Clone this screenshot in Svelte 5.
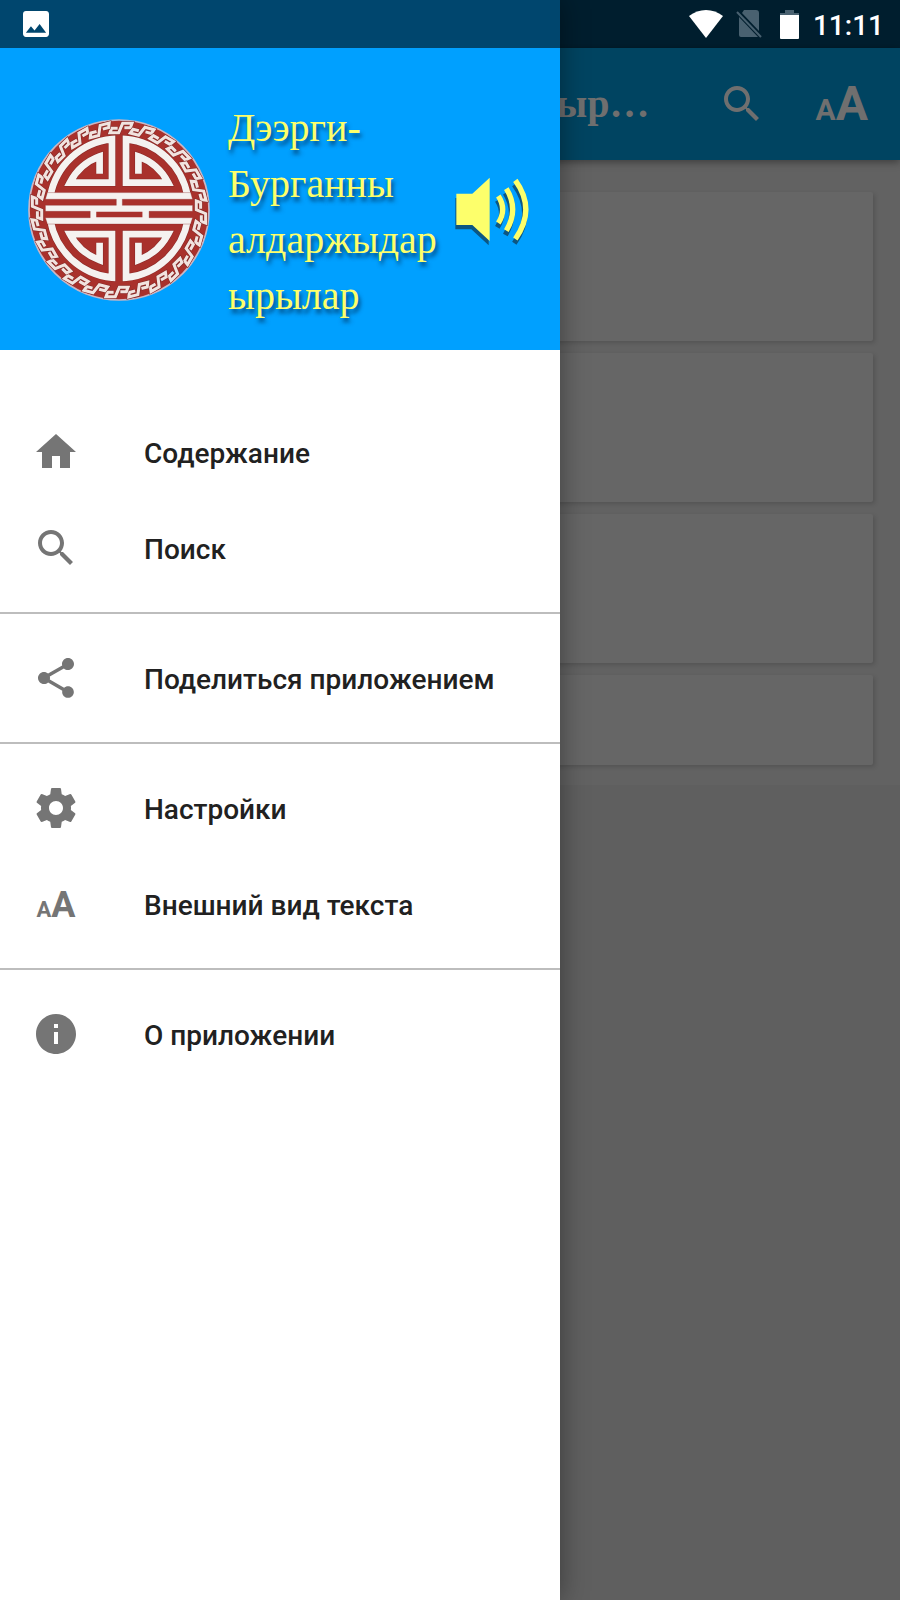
<script>
  const groups = [
    [
      { icon: 'home', label: 'Содержание' },
      { icon: 'search', label: 'Поиск' }
    ],
    [{ icon: 'share', label: 'Поделиться приложением' }],
    [
      { icon: 'settings', label: 'Настройки' },
      { icon: 'text', label: 'Внешний вид текста' }
    ],
    [{ icon: 'info', label: 'О приложении' }]
  ];

  const paths = {
    home: 'M10 20v-6h4v6h5v-8h3L12 3 2 12h3v8z',
    search:
      'M15.5 14h-.79l-.28-.27C15.41 12.59 16 11.11 16 9.5 16 5.91 13.09 3 9.5 3S3 5.91 3 9.5 5.91 16 9.5 16c1.61 0 3.09-.59 4.23-1.57l.27.28v.79l5 4.99L20.49 19l-4.99-5zm-6 0C7.01 14 5 11.99 5 9.5S7.01 5 9.5 5 14 7.01 14 9.5 11.99 14 9.5 14z',
    share:
      'M18 16.08c-.76 0-1.44.3-1.96.77L8.91 12.7c.05-.23.09-.46.09-.7s-.04-.47-.09-.7l7.05-4.11c.54.5 1.25.81 2.04.81 1.66 0 3-1.34 3-3s-1.34-3-3-3-3 1.34-3 3c0 .24.04.47.09.7L8.04 9.81C7.5 9.31 6.79 9 6 9c-1.66 0-3 1.34-3 3s1.34 3 3 3c.79 0 1.5-.31 2.04-.81l7.12 4.16c-.05.21-.08.43-.08.65 0 1.61 1.31 2.92 2.92 2.92s2.92-1.31 2.92-2.92-1.31-2.92-2.92-2.92z',
    settings:
      'M19.43 12.98c.04-.32.07-.64.07-.98s-.03-.66-.07-.98l2.11-1.65c.19-.15.24-.42.12-.64l-2-3.46c-.12-.22-.39-.3-.61-.22l-2.49 1c-.52-.4-1.08-.73-1.69-.98l-.38-2.65C14.46 2.18 14.25 2 14 2h-4c-.25 0-.46.18-.49.42l-.38 2.65c-.61.25-1.17.59-1.69.98l-2.49-1c-.23-.09-.49 0-.61.22l-2 3.46c-.13.22-.07.49.12.64l2.11 1.65c-.04.32-.07.65-.07.98s.03.66.07.98l-2.11 1.65c-.19.15-.24.42-.12.64l2 3.46c.12.22.39.3.61.22l2.49-1c.52.4 1.08.73 1.69.98l.38 2.65c.03.24.24.42.49.42h4c.25 0 .46-.18.49-.42l.38-2.65c.61-.25 1.17-.59 1.69-.98l2.49 1c.23.09.49 0 .61-.22l2-3.46c.12-.22.07-.49-.12-.64l-2.11-1.65zM12 15.5c-1.93 0-3.5-1.57-3.5-3.5s1.57-3.5 3.5-3.5 3.5 1.57 3.5 3.5-1.57 3.5-3.5 3.5z',
    info: 'M12 2C6.48 2 2 6.48 2 12s4.48 10 10 10 10-4.48 10-10S17.52 2 12 2zm1 15h-2v-6h2v6zm0-8h-2V7h2v2z'
  };

  const frets = Array.from({ length: 24 }, (_, i) => i * 15);
  const fret = 'M-10 1H-28L-33 14H-7L5 -14H33L28 -1H10';
  const quarter = 'M93 258A208 208 0 0 1 277 88V218H151A166 166 0 0 1 240 140V192';
  const quarters = ['', 'translate(596 0) scale(-1 1)', 'translate(0 590) scale(1 -1)', 'translate(596 590) scale(-1 -1)'];
</script>

{#snippet textSize()}
  <span class="aa" aria-hidden="true"><small>A</small>A</span>
{/snippet}

<div class="app">
  <div class="page">
    <header class="appbar">
      <h1>ыр…</h1>
      <button aria-label="Поиск">
        <svg class="glyph" viewBox="0 0 24 24" aria-hidden="true"><path d={paths.search} /></svg>
      </button>
      <button aria-label="Внешний вид текста">{@render textSize()}</button>
    </header>
    <main>
      <div class="card"></div>
      <div class="card"></div>
      <div class="card"></div>
      <div class="card short"></div>
    </main>
  </div>

  <aside class="drawer">
    <div class="banner">
      <svg class="emblem" viewBox="26 28 544 544" aria-hidden="true">
        <circle cx="298" cy="300" r="269" fill="#a9312c" stroke="#c9b6c4" stroke-width="5" />
        {#each frets as angle}
          <g transform="rotate({angle} 298 300) translate(304 55)" fill="none">
            <path d={fret} stroke="#7d2524" stroke-width="12" />
            <path d={fret} stroke="#f2e3df" stroke-width="9" />
          </g>
        {/each}
        {#each quarters as t}
          <g transform={t} fill="none">
            <path d={quarter} stroke="#8a2826" stroke-width="23" />
            <path d={quarter} stroke="#f5f2f0" stroke-width="20" />
          </g>
        {/each}
        <g fill="#f5f2f0" stroke="#8a2826" stroke-width="1">
          <path d="M84 248H512L518 268H308V286H518V304H388V323H518L512 342H84L78 323H212V304H78V286H290V268H78Z" />
        </g>
        <path d="M230 305H368V322H230Z" fill="#a9312c" />
      </svg>
      <p>Дээрги-<br />Бурганны<br />алдаржыдар<br />ырылар</p>
      <svg class="speaker" viewBox="736 260 225 216" aria-hidden="true">
        <g class="shade" transform="translate(-3 13)">
          <path d="M740 313H788L840 265V455L788 407H740Z" />
          <path class="wave" d="M866 320Q892 360 866 401M890 298Q928 360 890 424M917 273Q980 360 917 449" />
        </g>
        <path d="M740 313H788L840 265V455L788 407H740Z" />
        <path class="wave" d="M866 320Q892 360 866 401M890 298Q928 360 890 424M917 273Q980 360 917 449" />
      </svg>
    </div>
    <nav>
      {#each groups as group}
        <ul>
          {#each group as item}
            <li>
              <button>
                <span class="icon">
                  {#if item.icon === 'text'}
                    {@render textSize()}
                  {:else}
                    <svg class="glyph" viewBox="0 0 24 24" aria-hidden="true"><path d={paths[item.icon]} /></svg>
                  {/if}
                </span>
                <span class="label">{item.label}</span>
              </button>
            </li>
          {/each}
        </ul>
      {/each}
    </nav>
  </aside>

  <div class="status">
    <svg class="picture" viewBox="3 3 18 18" aria-hidden="true">
      <path d="M21 19V5c0-1.1-.9-2-2-2H5c-1.1 0-2 .9-2 2v14c0 1.1.9 2 2 2h14c1.1 0 2-.9 2-2zM8.500 13.500l2.500 3.010L14.500 12l4.500 6H5l3.500-4.500z" />
    </svg>
    <svg class="wifi" viewBox="0 0 34 28" aria-hidden="true"><path d="M17 28L0 6C10-2 24-2 34 6Z" /></svg>
    <svg class="sim" viewBox="0 0 26 28" aria-hidden="true">
      <path d="M8 0H20Q23 0 23 3V21L6 3ZM3 7L22 27H5Q3 27 3 25Z" />
      <path d="M1 2L25 27" stroke="#496170" stroke-width="2" />
    </svg>
    <svg class="battery" viewBox="0 0 19 29" aria-hidden="true">
      <path d="M5 0H14V3H19V6H0V3H5Z" fill="#496170" /><path d="M0 5H19V28Q19 29 18 29H1Q0 29 0 28Z" />
    </svg>
    <time>11:11</time>
  </div>
</div>

<style>
  :global(body) {
    margin: 0;
  }
  .app {
    position: relative;
    min-height: 100vh;
    overflow: hidden;
    background: #5f5f5f;
    font-family: Roboto, sans-serif;
    font-weight: 500;
  }
  .page {
    padding-top: 48px;
    background: #001e2e;
  }
  button {
    border: 0;
    padding: 0;
    background: none;
    color: inherit;
    font: inherit;
    cursor: pointer;
  }
  svg {
    display: block;
    flex: none;
    fill: currentColor;
  }
  .glyph {
    width: 48px;
    height: 48px;
  }
  .aa {
    display: block;
    padding-top: 6px;
    font: 700 48px/48px Roboto, sans-serif;
    white-space: nowrap;
  }
  .aa small {
    font-size: 30px;
  }
  .appbar {
    position: relative;
    display: flex;
    align-items: center;
    justify-content: flex-end;
    height: 112px;
    box-sizing: border-box;
    padding-right: 32px;
    background: #004461;
    color: #6f6f6f;
    box-shadow: 0 2px 8px rgba(0, 0, 0, 0.4);
  }
  h1 {
    margin: 0 68px 0 0;
    font: 700 40px/48px "Liberation Serif", serif;
  }
  .appbar button + button {
    margin-left: 50px;
  }
  main {
    display: flex;
    flex-direction: column;
    gap: 12px;
    padding: 32px 27px 20px;
    background: #626262;
  }
  .card {
    height: 149px;
    border-radius: 2px;
    background: #666;
    box-shadow: 2px 2px 4px rgba(0, 0, 0, 0.15);
  }
  .short {
    height: 90px;
  }
  .drawer {
    position: absolute;
    inset: 0 auto 0 0;
    width: min(560px, 85%);
    box-sizing: border-box;
    border-top: 48px solid #00466e;
    background: #fff;
    box-shadow: 0 0 26px rgba(0, 0, 0, 0.4);
  }
  .banner {
    display: flex;
    align-items: center;
    height: 302px;
    box-sizing: border-box;
    padding: 26px 30px 0 28px;
    background: #00a0ff;
    color: #fdff6b;
  }
  .emblem {
    width: 182px;
    height: 182px;
    margin-bottom: 4px;
  }
  .banner p {
    flex: 1;
    margin: 0 0 0 18px;
    font: 400 40px/56px "Liberation Serif", serif;
    text-shadow: 2px 4px 4px rgba(0, 40, 80, 0.75);
  }
  .speaker {
    width: 75px;
    height: 72px;
  }
  .wave {
    fill: none;
    stroke: currentColor;
    stroke-width: 16;
  }
  .shade {
    color: #0c5683;
  }
  nav {
    padding-top: 38px;
  }
  ul {
    margin: 0;
    padding: 16px 0;
    list-style: none;
  }
  ul + ul {
    border-top: 2px solid #bdbdbd;
  }
  li button {
    display: flex;
    align-items: center;
    width: 100%;
    height: 96px;
    padding-left: 32px;
    color: #212121;
    font-size: 28px;
    text-align: left;
  }
  .label {
    padding-top: 2px;
  }
  .icon {
    display: grid;
    place-items: center;
    width: 48px;
    margin-right: 64px;
    color: #757575;
  }
  .icon .aa {
    font-size: 36px;
  }
  .icon small {
    font-size: 22px;
  }
  .status {
    position: absolute;
    inset: 0 0 auto;
    display: flex;
    align-items: center;
    height: 48px;
    padding: 0 16px 0 23px;
    color: #fff;
    font-size: 28px;
  }
  .status time {
    padding-top: 2px;
  }
  .picture {
    width: 26px;
    height: 26px;
    margin-right: auto;
  }
  .wifi {
    width: 34px;
    height: 28px;
  }
  .sim {
    width: 26px;
    height: 28px;
    margin: 0 18px 0 13px;
    color: #496170;
  }
  .battery {
    width: 19px;
    height: 29px;
    margin-right: 14px;
  }
</style>
